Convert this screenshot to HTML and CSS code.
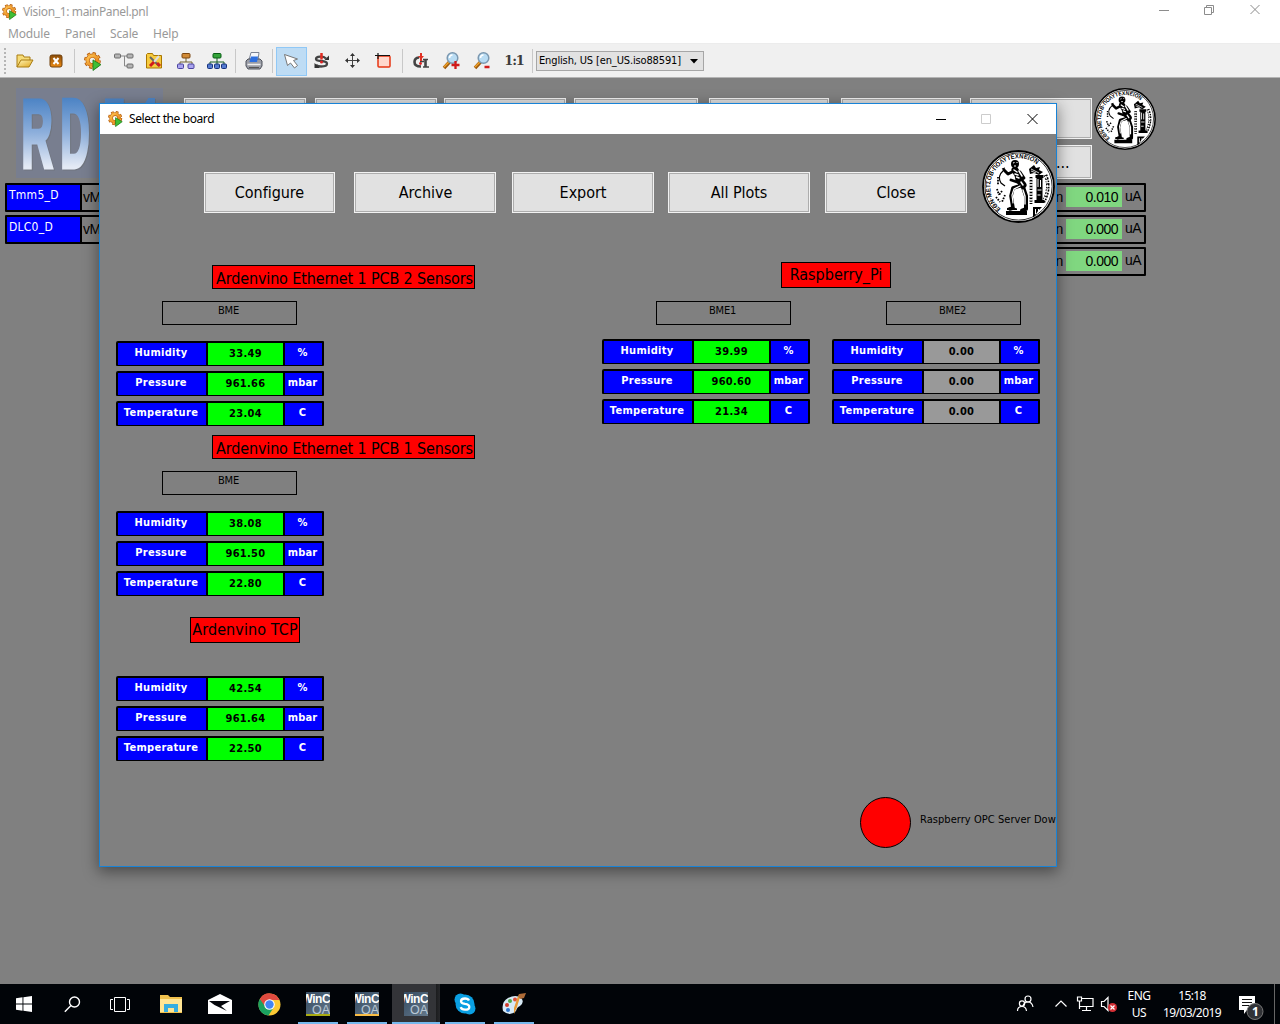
FILE: index.html
```html
<!DOCTYPE html>
<html lang="en">
<head>
<meta charset="utf-8">
<title>Vision_1: mainPanel.pnl</title>
<link rel="stylesheet" href="styles.css">
</head>
<body>
<svg class="defs" width="0" height="0">
  <defs>
    <linearGradient id="gold" x1="0" y1="0" x2="1" y2="1"><stop offset="0" stop-color="#fff6b8"/><stop offset="1" stop-color="#e0a61c"/></linearGradient>
    <linearGradient id="orange" x1="0" y1="0" x2="1" y2="1"><stop offset="0" stop-color="#ffc452"/><stop offset="1" stop-color="#e07a10"/></linearGradient>
    <linearGradient id="brown" x1="0" y1="0" x2="0" y2="1"><stop offset="0" stop-color="#8a4c08"/><stop offset="1" stop-color="#ec8a12"/></linearGradient>
    <linearGradient id="ice" gradientUnits="userSpaceOnUse" x1="0" y1="-70" x2="0" y2="0"><stop offset="0" stop-color="#4a82c4"/><stop offset=".5" stop-color="#8caedb"/><stop offset="1" stop-color="#e4eaf5"/></linearGradient>
    <linearGradient id="steel" x1="0" y1="0" x2="1" y2="1"><stop offset="0" stop-color="#354b61"/><stop offset="1" stop-color="#64788a"/></linearGradient>
    <symbol id="gear" viewBox="0 0 18 18">
      <circle cx="8" cy="8" r="6.500" fill="none" stroke="#b8600f" stroke-width="3" stroke-dasharray="2.9 2.2"/>
      <circle cx="8" cy="8" r="4.500" fill="none" stroke="#b8600f" stroke-width="4"/>
      <circle cx="8" cy="8" r="4.500" fill="none" stroke="url(#orange)" stroke-width="2.800"/>
      <circle cx="8" cy="8" r="6.300" fill="none" stroke="#f3a63a" stroke-width="1.600" stroke-dasharray="2 2.950" stroke-dashoffset="-.4"/>
      <path d="M8.500 7.500 16 12 8.500 17.500z" fill="#3fbf36" stroke="#1c7a18" stroke-width=".8"/>
    </symbol>
    <symbol id="seal" viewBox="0 0 73 73">
      <circle cx="36.5" cy="36.5" r="35.500" fill="#fff" stroke="#000" stroke-width="1.800"/>
      <circle cx="36.5" cy="36.5" r="33.600" fill="none" stroke="#000" stroke-width=".8"/>
      <path id="sealArc" d="M18.800 58.900A28.500 28.500 0 1 1 54.800 14.700" fill="none"/>
      <text class="seal-text"><textPath href="#sealArc" textLength="89" lengthAdjust="spacingAndGlyphs">ΕΘΝ·ΜΕΤΣΟΒ·ΠΟΛΥΤΕΧΝΕΙΟΝ</textPath></text>
      <path d="M63.500 25Q69 38 61.500 52" fill="none" stroke="#000" stroke-width="3.500" stroke-dasharray="1.600 1 2.200 1.200"/>
      <path d="M63.500 26Q68 38 62 50" fill="none" stroke="#fff" stroke-width="1.200" stroke-dasharray="3 1.400"/>
      <path d="M47 19l5-4 2 3 4-1-1 3 4 2-4 3-5-2-4 1z" fill="#000"/>
      <path d="M49 19l8 4M49 21l5 2" stroke="#fff" stroke-width=".8"/>
      <path d="M53.500 25h8v3h-1v22h2v3h-10v-3h2V28h-1z" fill="#000"/>
      <path d="M56 29v8m2.500-7v7m-3 3h4m-4 5h3" stroke="#fff"/>
      <path d="M49 27v27" stroke="#000" stroke-width="2.800" stroke-dasharray="1.500 1.300 2 1"/>
      <path d="M49 28v25" stroke="#fff" stroke-width=".9" stroke-dasharray="2 1"/>
      <path d="M16 27v8M20 41l-3 4M23 45l-3 7M15 39l2 6M14 47l4 5" fill="none" stroke="#000" stroke-width="1.800" stroke-dasharray="1.600 1.200"/>
      <path d="M21 21q-6 5-2 12l4 3M23 18l-3 1" fill="none" stroke="#000" stroke-width="1.200"/>
      <g fill="none" stroke="#000" stroke-linecap="round" stroke-linejoin="round">
        <path d="M33 20l3 5 1 5 4 5" stroke-width="7"/>
        <path d="M30 22l-4 2-4-4" stroke-width="3"/>
        <path d="M38 22l4 6-7 4-6-2" stroke-width="2.800"/>
        <path d="M41 35l-10 3-2 8 2 12-3 1" stroke-width="3.600"/>
        <path d="M41 37l3 9 0 13-4 1.500" stroke-width="4"/>
      </g>
      <g fill="none" stroke="#fff" stroke-linecap="round">
        <path d="M32 20l3 2M33 24l3 1M34.500 27l2.500 1M37 21l3 5M39 32l2 3" stroke-width="1.500"/>
        <path d="M38 36l-6 3-2 6 1 8" stroke-width="1.200"/><path d="M41 40l2 6v8" stroke-width="1.400"/>
      </g>
      <circle cx="33" cy="14" r="4" fill="#000"/><path d="M31 13l1.500-.5M32 16h2M35 12v1" stroke="#fff"/>
      <path d="M24 61h21v4H24zM25 58l5-1 5 1.500v1.500H25zM52 57h8l-4 4-4 6h-1V57z" fill="#000"/>
      <path d="M53.500 59v5m3-5v2" stroke="#fff"/>
    </symbol>
    <symbol id="folder" viewBox="0 0 20 20">
      <path d="M2 16V4h6l1 2h6v3" fill="#f6dc78" stroke="#a97c12"/>
      <path d="M2 16 6 9h12l-4 7z" fill="url(#gold)" stroke="#a97c12"/>
    </symbol>
    <symbol id="lens" viewBox="0 0 20 20">
      <path d="M7.500 11 2 17" stroke="#a05a0c" stroke-width="3.400"/><path d="M7 11 2 16" stroke="#f0a32a" stroke-width="1.500"/>
      <circle cx="10.500" cy="7" r="5.300" fill="#b9dcf3" stroke="#7b98b0" stroke-width="1.500"/>
      <path d="M7.500 7q0-3 3-3" fill="none" stroke="#fff" stroke-width="1.500"/>
    </symbol>
  </defs>
</svg>

<header class="titlebar">
  <svg class="app-icon" width="16" height="16"><use href="#gear" width="16" height="16"/></svg>
  <span class="title">Vision_1: mainPanel.pnl</span>
  <svg class="winbtns" width="102" height="12" fill="none" stroke="#8c8c8c"><path d="M0 6.500h10M45.500 3.500h7v7h-7zM47.500 3V1.500h7v7H53M91.500 1l9 9m0-9-9 9"/></svg>
</header>
<nav class="menubar"><span class="m1">Module</span><span class="m2">Panel</span><span class="m3">Scale</span><span class="m4">Help</span></nav>
<div class="toolbar">
  <i class="grip"></i>
  <b class="tool"><svg width="20" height="20"><use href="#folder"/></svg></b>
  <b class="tool"><svg width="20" height="20"><rect x="4" y="4" width="12" height="12" rx="2" fill="url(#brown)" stroke="#70400c"/><path d="m7.500 7 5 6m0-6-5 6" stroke="#fff" stroke-width="2"/></svg></b>
  <i class="sep"></i>
  <b class="tool"><svg width="19" height="19"><use href="#gear"/></svg></b>
  <b class="tool"><svg width="20" height="20"><path d="M6 5h9M10.500 5v10H14" fill="none" stroke="#888"/><g fill="#b5b5b5" stroke="#6d6d6d"><rect x=".5" y="3" width="6" height="4" rx="1"/><rect x="13" y="3" width="6" height="4" rx="1"/><rect x="13" y="13" width="6" height="4" rx="1"/></g></svg></b>
  <b class="tool"><svg width="20" height="20"><path d="M1.500 17V3.500l1-1h5l1 2h8V17z" fill="#f7cb3e" stroke="#a97600"/><path d="m5 6 9 9" stroke="#666" stroke-width="2"/><path d="m14 5-5 6" stroke="#ddd" stroke-width="2"/><path d="m9 11-4 4" stroke="#d11a1a" stroke-width="3"/><path d="m12 12 3 3" stroke="#c22" stroke-width="3"/></svg></b>
  <b class="tool"><svg width="20" height="20"><path d="M10 7v4M4 14v-3h12v3" fill="none" stroke="#706230"/><rect x="6" y="2.500" width="8" height="4.500" rx="1" fill="#d08a36" stroke="#7b4610"/><g fill="#aaa5ef" stroke="#4b43a0"><rect x="1.500" y="13" width="6" height="4.500" rx="1"/><rect x="12" y="13" width="6" height="4.500" rx="1"/></g></svg></b>
  <b class="tool"><svg width="20" height="20"><path d="M10 7v7M3 14v-3h14v3" fill="none" stroke="#175d27"/><rect x="6" y="2.500" width="8" height="4.500" rx="1" fill="#35a43a" stroke="#075e15"/><g fill="#547ad0" stroke="#16327d"><rect x=".5" y="13" width="5" height="4.500" rx="1"/><rect x="7.500" y="13" width="5" height="4.500" rx="1"/><rect x="14.500" y="13" width="5" height="4.500" rx="1"/></g></svg></b>
  <i class="sep"></i>
  <b class="tool"><svg width="20" height="20"><path d="M5 9 7 1.500h8L14 9" fill="#f4f6fa" stroke="#7a8292"/><path d="M4 8h12l2 2v5l-2 3H4l-2-3v-5z" fill="#9a9da6" stroke="#4f535c"/><path d="M7 5.500h7L13 11H5.500z" fill="#2d6fdf"/><path d="M3.500 13.500h13" stroke="#eee" stroke-width="1.500"/><path d="M5 16.500h10" stroke="#555"/></svg></b>
  <i class="sep"></i>
  <b class="tool active"><svg width="20" height="20"><path d="m3.500 3.500 3 11 3-2.500 4 5 3-2.500-4-5 4-1.500z" fill="#fff" stroke="#777" stroke-linejoin="round"/></svg></b>
  <b class="tool"><svg width="20" height="20"><path d="M14 7.500Q12 5.500 8 5.700 4 6 4 8q0 1.700 5 2 6 .3 6 2.800 0 2.700-6 2.700-3 0-5-1.500" fill="none" stroke="#444" stroke-width="2.300"/><path d="M2.500 12v5H8zM12.500 9h4.500V4.500z" fill="#333"/><path d="M9.500 2v6.500" stroke="#e22c22" stroke-width="2.500"/><circle cx="9.500" cy="11" r="1.500" fill="#d22"/></svg></b>
  <b class="tool"><svg width="20" height="20"><path d="M9.500 4v12M4 9.500h12" stroke="#444"/><path d="m9.500 2 2.500 3H7zm0 15L7 14h5zM2 9.500 5 7v5zm15 0L14 12V7z" fill="#333"/></svg></b>
  <b class="tool"><svg width="20" height="20"><rect x="4" y="5" width="12" height="11" rx="1" fill="#ffd7cc" stroke="#e63512" stroke-width="1.500"/><path d="M4 2v6M1 4.500h15" stroke="#111" stroke-width="1.200"/></svg></b>
  <i class="sep"></i>
  <b class="tool"><svg width="20" height="20"><path d="M8 6.500Q3.500 7 3.500 11q0 4.500 6.500 4.500M14.500 8v8" fill="none" stroke="#444" stroke-width="2.600"/><path d="M9 10.500h4M12 8.500h5M12 16h6" stroke="#444" stroke-width="1.400"/><path d="M10 2v8" stroke="#e03023" stroke-width="2"/><path d="m7 5 3 3.500L13 5z" fill="#e03023"/><circle cx="9.500" cy="12.500" r="1.400" fill="#d22"/></svg></b>
  <b class="tool"><svg width="20" height="20"><use href="#lens"/><path d="M13.500 10v8m-4-4h8" stroke="#d11b1b" stroke-width="2.300"/></svg></b>
  <b class="tool"><svg width="20" height="20"><use href="#lens"/><path d="M11.500 16h5" stroke="#d11b1b" stroke-width="2.500"/></svg></b>
  <b class="tool one">1:1</b>
  <i class="sep"></i>
  <div class="combo"><span>English, US [en_US.iso88591]</span><svg width="8" height="5"><path d="M0 0h8L4 4.500z"/></svg></div>
</div>

<main class="panel">
  <div class="panel-head">
    <svg class="logo" width="147" height="90"><g class="logo-text" fill="url(#ice)" stroke="url(#ice)" stroke-width="5">
      <text transform="translate(5.500 79) scale(.45 1)">R</text><text transform="translate(44.500 79) scale(.42 1)">D</text><text transform="translate(87 79) scale(.42 1)">5</text><text transform="translate(123 79) scale(.42 1)">1</text></g></svg>
    <div class="head-buttons">
      <i class="btn"></i><i class="btn"></i><i class="btn"></i><i class="btn"></i><i class="btn"></i><i class="btn"></i><i class="btn"></i>
      <i class="btn more">...</i>
    </div>
    <svg class="head-seal" width="62" height="62"><use href="#seal"/></svg>
  </div>
  <div class="channels">
    <div class="channel"><span class="name">Tmm5_D</span><span class="mon">vM</span><span class="mon end">n</span><span class="cur">0.010</span><span class="ua">uA</span></div>
    <div class="channel"><span class="name">DLC0_D</span><span class="mon">vM</span><span class="mon end">n</span><span class="cur">0.000</span><span class="ua">uA</span></div>
    <div class="channel short"><span class="mon end">n</span><span class="cur">0.000</span><span class="ua">uA</span></div>
  </div>

  <section class="dialog">
    <header class="dialog-title">
      <svg width="16" height="16"><use href="#gear"/></svg><span>Select the board</span>
      <svg class="dialog-btns" width="102" height="12" fill="none"><path d="M0 6.500h10M91.500 1l10 10m0-10-10 10" stroke="#000"/><path d="M45.500 1.500h9v9h-9z" stroke="#ccc"/></svg>
    </header>
    <div class="actions">
      <span class="btn a1">Configure</span><span class="btn a2">Archive</span><span class="btn a3">Export</span><span class="btn a4">All Plots</span><span class="btn a5">Close</span>
      <svg class="seal" width="73" height="73"><use href="#seal"/></svg>
    </div>
    <div class="boards">
      <div class="board-col">
        <h2 class="head wide">Ardenvino Ethernet 1 PCB 2 Sensors</h2>
        <div class="chip">BME</div>
        <div class="rows">
          <div class="row"><span>Humidity</span><b>33.49</b><span>%</span></div>
          <div class="row"><span>Pressure</span><b>961.66</b><span>mbar</span></div>
          <div class="row"><span>Temperature</span><b>23.04</b><span>C</span></div>
        </div>
        <h2 class="head wide second">Ardenvino Ethernet 1 PCB 1 Sensors</h2>
        <div class="chip">BME</div>
        <div class="rows">
          <div class="row"><span>Humidity</span><b>38.08</b><span>%</span></div>
          <div class="row"><span>Pressure</span><b>961.50</b><span>mbar</span></div>
          <div class="row"><span>Temperature</span><b>22.80</b><span>C</span></div>
        </div>
        <h2 class="head tcp">Ardenvino TCP</h2>
        <div class="rows tcp-rows">
          <div class="row"><span>Humidity</span><b>42.54</b><span>%</span></div>
          <div class="row"><span>Pressure</span><b>961.64</b><span>mbar</span></div>
          <div class="row"><span>Temperature</span><b>22.50</b><span>C</span></div>
        </div>
      </div>
      <div class="board-col pi">
        <h2 class="head rasp">Raspberry_Pi</h2>
        <div class="pair">
          <div>
            <div class="chip c1">BME1</div>
            <div class="rows">
              <div class="row"><span>Humidity</span><b>39.99</b><span>%</span></div>
              <div class="row"><span>Pressure</span><b>960.60</b><span>mbar</span></div>
              <div class="row"><span>Temperature</span><b>21.34</b><span>C</span></div>
            </div>
          </div>
          <div class="off">
            <div class="chip c1">BME2</div>
            <div class="rows">
              <div class="row"><span>Humidity</span><b>0.00</b><span>%</span></div>
              <div class="row"><span>Pressure</span><b>0.00</b><span>mbar</span></div>
              <div class="row"><span>Temperature</span><b>0.00</b><span>C</span></div>
            </div>
          </div>
        </div>
        <div class="status"><i class="lamp"></i><span>Raspberry OPC Server Down</span></div>
      </div>
    </div>
  </section>
</main>

<footer class="taskbar">
  <div class="sys"><svg width="16" height="16" fill="#fff"><path d="M0 2.200 6.500 1.300v6.200H0zM7.400 1.200 16 0v7.500H7.400zM0 8.500h6.500v6.200L0 13.800zM7.400 8.500H16V16l-8.600-1.200z"/></svg></div>
  <div class="sys"><svg width="17" height="17" fill="none" stroke="#fff" stroke-width="1.400"><circle cx="10.500" cy="6" r="5"/><path d="M7 9.500.8 15.800"/></svg></div>
  <div class="sys"><svg width="20" height="15" fill="none" stroke="#fff"><path d="M4.500.5h11v14h-11zM3 2.500H.5v10H3M17 2.500h2.500v10H17"/></svg></div>
  <div class="task first"><svg width="22" height="20"><path d="M0 1h8l2 2h12v16H0z" fill="#f0c14d"/><path d="M0 5h22v13H0z" fill="#ffe594"/><path d="M4 18v-8h14v8h-4v-4H8v4z" fill="#35ade0"/></svg></div>
  <div class="task"><svg width="24" height="20"><path d="M0 6 12 0l12 6v14H0z" fill="#fff"/><path d="M1 7h21l-9 5 6 5L6.500 11z" fill="#05070b"/></svg></div>
  <div class="task"><svg width="23" height="23"><circle cx="11.500" cy="11.500" r="11" fill="#fcc934"/><path d="M11.500 11.500 1.800 6A11 11 0 0 0 10.500 22.500L16 14z" fill="#1aa260"/><path d="M1.800 6a11 11 0 0 1 19.700 1H11.500l-4 7z" fill="#e04a3f"/><circle cx="11.500" cy="11.500" r="5.300" fill="#fff"/><circle cx="11.500" cy="11.500" r="4.200" fill="#4285f4"/></svg></div>
  <div class="task open"><svg width="24" height="24"><rect width="24" height="24" fill="url(#steel)"/><text class="wc" x="-4.500" y="11">WinC</text><text class="oa" x="6" y="22">OA</text><path d="M0 22h24v2H0z" fill="#a9ac12"/></svg></div>
  <div class="task open"><svg width="24" height="24"><rect width="24" height="24" fill="url(#steel)"/><text class="wc" x="-4.500" y="11">WinC</text><text class="oa" x="6" y="22">OA</text><path d="M0 22h24v2H0z" fill="#f9bd45"/></svg></div>
  <div class="task current"><svg width="24" height="24"><rect width="24" height="24" fill="url(#steel)"/><text class="wc" x="-4.500" y="11">WinC</text><text class="oa" x="6" y="22">OA</text></svg></div>
  <div class="task open"><svg width="22" height="22"><g fill="#0a9fe2"><circle cx="11" cy="11" r="9.500"/><circle cx="6.500" cy="6.500" r="6"/><circle cx="15.500" cy="15.500" r="6"/></g><path d="M15 7.500Q14 5.500 11 5.500q-4 0-4 2.700 0 2 4 2.700 4.300.6 4.300 3 0 2.800-4.300 2.800-3.500 0-4.300-2.500" fill="none" stroke="#fff" stroke-width="2.300"/></svg></div>
  <div class="task open"><svg width="24" height="24"><path d="M1 19Q-1 10 6 6q8-4 13 0 4 4-1 8-3 1-4 5-6 6-13 0z" fill="#d7e9f5"/><circle cx="5" cy="13" r="2" fill="#cf3b2b"/><circle cx="8" cy="9" r="2" fill="#4fa948"/><circle cx="13" cy="7.500" r="2" fill="#e24e39"/><circle cx="6" cy="18" r="2" fill="#2c77cf"/><path d="M18 5 15 15l-3 7V16l4-12z" fill="#e89a35"/><path d="m16 4 1-2 7-1-2 5-4 1z" fill="#ad6b37"/></svg></div>
  <div class="tray">
    <svg width="140" height="40" fill="none" stroke="#fff" stroke-width="1.200">
      <circle cx="19" cy="15" r="3"/><path d="M14 22q1-4 5-4 4 0 5 5"/><circle cx="13" cy="19.500" r="2.600"/><path d="M8.500 27q0-4.500 4.500-4.500 4 0 4.500 4.500"/>
      <path d="m46.500 22.500 5.500-5.500 5.500 5.500"/>
      <path d="M73 14.500h11v8H70M68.500 13v4h4v-4zM70.500 17v8M77.500 23v3M73 26.500h9"/>
      <path d="M92.500 17.500H95l4-4v13l-4-4h-2.500z"/><circle cx="103.500" cy="23.500" r="4.500" fill="#d32f35" stroke="none"/><path d="m101.500 21.500 4 4m0-4-4 4"/>
    </svg>
    <div class="lang">ENG<br>US</div>
    <div class="clock">15:18<br>19/03/2019</div>
    <svg class="note" width="26" height="28"><path d="M0 1h16v14h-8l-3 4v-4H0z" fill="#fff"/><path d="M3 4.500h10M3 7.500h10M3 10.500h7" stroke="#111"/><circle cx="16" cy="16.500" r="8" fill="#303236" stroke="#777"/><text x="13" y="21">1</text></svg>
    <i class="desk"></i>
  </div>
</footer>
</body>
</html>
```
FILE: styles.css
```css
* { box-sizing: border-box; }
body { margin: 0; width: 1280px; height: 1024px; overflow: hidden; display: flex; flex-direction: column; font: 12px/16px "Noto Sans", sans-serif; background: #808080; }
svg { display: block; flex: none; }
i, b { font-style: normal; display: block; }
.defs { position: absolute; }
.seal-text { font: bold 6.5px "Liberation Sans", sans-serif; fill: #000; }

.titlebar { height: 24px; background: #fff; color: #999; display: flex; align-items: center; padding-left: 2px; }
.titlebar .title { margin-left: 5px; letter-spacing: -.35px; }
.winbtns { margin-left: auto; margin-right: 19px; margin-top: -4px; }
.menubar { height: 20px; background: #fff; color: #999; display: flex; padding: 2px 0 0 8px; border-bottom: 1px solid #ececec; }
.menubar span { letter-spacing: -.15px; }
.m1 { width: 57px; } .m2 { width: 45px; } .m3 { width: 43px; }
.toolbar { height: 34px; background: #f0f0f0; border-bottom: 1px solid #b4b4b4; display: flex; align-items: center; padding: 1px 0 0 4px; }
.grip { width: 6px; height: 26px; background: radial-gradient(circle at 1px 1px, #b5b5b5 1px, transparent 1.4px) 0 0 / 6px 4px; }
.tool { width: 31px; height: 29px; flex: none; display: flex; align-items: center; justify-content: center; padding-right: 1px; }
.tool.active { background: #bedcf4; border: 1px solid #90c8f6; }
.tool.one { font: bold 13px/16px "DejaVu Serif", serif; color: #3c3c3c; letter-spacing: -1.2px; }
.sep { width: 6px; height: 24px; background: linear-gradient(#c8c8c8, #c8c8c8) 2px 0 / 1px 100% no-repeat; flex: none; }
.combo { width: 168px; height: 20px; background: #e2e2e2; border: 1px solid #a6a6a6; display: flex; align-items: center; justify-content: space-between; padding: 0 5px 0 2px; font: 11px/16px "DejaVu Sans Condensed", "DejaVu Sans", sans-serif; font-stretch: condensed; letter-spacing: -.14px; white-space: nowrap; color: #000; }

.panel { height: 906px; background: #808080; position: relative; overflow: hidden; }
.panel-head { display: flex; padding: 10px 0 0 16px; height: 105px; }
.logo { background: #787e8f; }
.logo-text { font: bold 96px "Liberation Sans", sans-serif; filter: drop-shadow(1px 1px 0 #70757f); }
.head-buttons { margin: 10px 2px 0 21px; width: 908px; display: grid; grid-template-columns: 131px 129px 130px 135px 132px 129px 122px; grid-template-rows: 41px 34px; row-gap: 6px; }
.btn { background: #e1e1e1; border: 1px solid #f2f2f2; box-shadow: inset 0 0 0 1px #adadad; display: flex; align-items: center; justify-content: center; padding-top: 1px; font: 16px/20px "DejaVu Sans Condensed", "DejaVu Sans", sans-serif; font-stretch: condensed; letter-spacing: -.05px; color: #000; }
.head-buttons .btn { width: 122px; }
.head-buttons .btn:nth-child(4) { width: 124px; }
.head-buttons .btn:nth-child(5), .head-buttons .btn:nth-child(6) { width: 120px; }
.btn.more { grid-column: 7; justify-content: flex-start; padding-left: 85px; }
.channels { padding-left: 5px; width: 1146px; display: flex; flex-direction: column; gap: 3px; }
.channel { height: 29px; border: 2px solid #000; border-radius: 1px; display: flex; font: 14px/16px "Liberation Sans", sans-serif; }
.channel.short { margin-left: 600px; }
.name { width: 75px; background: #00f; color: #fff; border-right: 2px solid #000; padding: 2px 0 0 2px; font: 12px/16px "DejaVu Sans Condensed", "DejaVu Sans", sans-serif; font-stretch: condensed; letter-spacing: .25px; }
.mon { padding: 4px 0 0 1px; letter-spacing: -.4px; }
.mon.end { margin-left: auto; padding-right: 3px; }
.cur { width: 56px; height: 20px; margin-top: 2px; background: #80d780; text-align: right; padding: 2px 4px 0 0; letter-spacing: -.5px; font-size: 14px; }
.ua { width: 22px; padding: 3px 0 0 3px; letter-spacing: -.5px; }

.dialog { position: absolute; left: 99px; top: 25px; width: 958px; height: 764px; border: 1px solid #1883d7; background: #808080; box-shadow: 0 4px 14px 1px rgba(0,0,0,.42); overflow: hidden; color: #000; }
.dialog-title { height: 30px; background: #fff; display: flex; align-items: center; padding-left: 8px; }
.dialog-title span { margin-left: 5px; letter-spacing: -.4px; }
.dialog-btns { margin-left: auto; margin-right: 18px; }
.actions { height: 125px; padding: 16px 0 0 104px; display: flex; }
.actions .btn { height: 41px; margin-top: 22px; width: 142px; }
.actions .a1 { width: 131px; }
.actions .a2 { margin-left: 19px; padding-left: 1px; } .actions .a3 { margin-left: 16px; } .actions .a4 { margin-left: 14px; } .actions .a5 { margin-left: 15px; }
.actions .seal { margin-left: 15px; }
.boards { display: flex; padding-left: 16px; }
.board-col { width: 486px; padding-top: 6px; flex: none; }
.head { margin: 0; border: 1px solid #000; background: #f00; font: 16px/24px "DejaVu Sans Condensed", "DejaVu Sans", sans-serif; font-stretch: condensed; white-space: nowrap; text-align: center; }
.head.wide { width: 263px; height: 24px; margin-left: 96px; letter-spacing: -.14px; text-align: left; padding-left: 3px; line-height: 25px; }
.head.second { margin-top: 9px; }
.head.tcp { width: 110px; height: 26px; margin: 21px 0 0 74px; letter-spacing: .1px; }
.head.rasp { width: 110px; height: 26px; margin-left: 179px; }
.chip { width: 135px; height: 24px; border: 1px solid #000; margin: 12px 0 0 46px; padding-right: 2px; text-align: center; font: 11px/17px "DejaVu Sans Condensed", "DejaVu Sans", sans-serif; font-stretch: condensed; letter-spacing: -.2px; }
.rows { width: 208px; margin-top: 16px; display: flex; flex-direction: column; gap: 5px; }
.tcp-rows { margin-top: 33px; }
.row { height: 25px; border: 2px solid #000; background: #000; display: grid; grid-template-columns: 88px 75px 37px; gap: 2px; border-radius: 2px 1px 1px 1px; text-align: center; font: bold 11px/20px "DejaVu Sans Condensed", "DejaVu Sans", sans-serif; font-stretch: condensed; letter-spacing: .3px; }
.row span { background: #00f; color: #fff; padding-right: 2px; white-space: nowrap; }
.row span:last-child { letter-spacing: .1px; }
.row b { background: #0f0; line-height: 22px; }
.off b { background: #999; }
.pi { width: 454px; padding-top: 3px; }
.pair { display: flex; gap: 22px; }
.pair .chip { margin: 13px 0 0 54px; }
.pair .rows { margin-top: 14px; }
.status { display: flex; margin: 373px 0 0 258px; width: 196px; white-space: nowrap; font: 11px/14px "DejaVu Sans Condensed", "DejaVu Sans", sans-serif; font-stretch: condensed; }
.lamp { width: 51px; height: 51px; flex: none; border-radius: 50%; border: 1px solid #000; background: #f00; }
.status span { margin: 16px 0 0 9px; letter-spacing: .05px; }

.taskbar { height: 40px; background: #010408; display: flex; color: #fff; }
.sys, .task { width: 48px; height: 40px; display: flex; align-items: center; justify-content: center; flex: none; }
.task { width: 49px; padding-right: 1px; }
.task.first { margin-left: 3px; }
.open { background: linear-gradient(#76b9ed, #76b9ed) 4px 38px / 40px 2px no-repeat; }
.current { padding-right: 2px; background: linear-gradient(#76b9ed, #76b9ed) 0 38px / 48px 2px no-repeat, linear-gradient(90deg, #333438 44px, #1b1c1e 44px, #27282b 48px, #010408 48px); }
.wc { font: bold 12px "Liberation Sans", sans-serif; fill: #fff; letter-spacing: -.5px; }
.oa { font: 12.5px "Liberation Sans", sans-serif; fill: #b9c8d5; }
.tray { margin-left: auto; width: 271px; display: flex; font-size: 12px; line-height: 17px; text-align: center; }
.tray > svg:first-child { margin-right: -24px; }
.tray > svg:first-child, .lang, .clock { flex: none; }
.lang { width: 28px; padding-top: 3px; letter-spacing: -.5px; }
.clock { width: 78px; padding-top: 3px; letter-spacing: -.6px; }
.note { margin: 11px 0 0 8px; }
.note text { font: bold 12px "Noto Sans", sans-serif; fill: #fff; }
.desk { width: 1px; height: 40px; background: #666; margin-left: 9px; }
```
